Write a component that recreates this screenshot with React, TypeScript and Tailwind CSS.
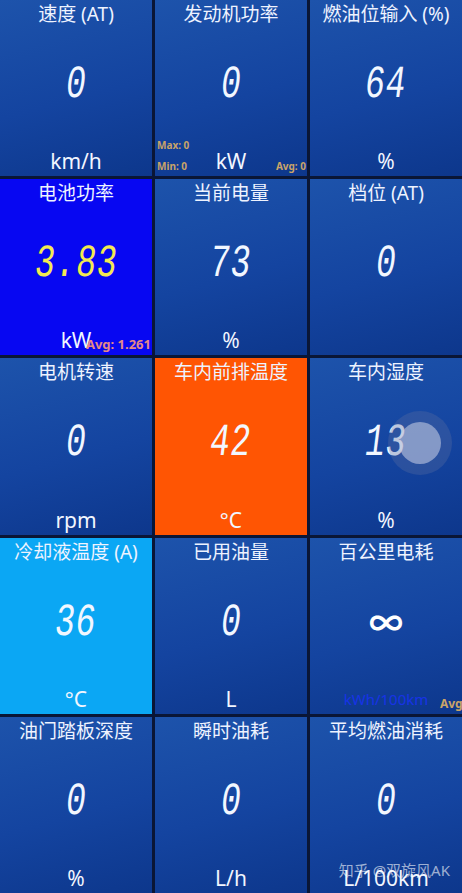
type Tile = {
  title: string
  value: string
  unit: string
  bg?: string
  valueColor?: string
  extra?: React.ReactNode
  unitClass?: string
}

const tiles: Tile[] = [
  { title: '速度 (AT)', value: '0', unit: 'km/h' },
  {
    title: '发动机功率',
    value: '0',
    unit: 'kW',
    extra: (
      <>
        <span className="absolute left-[2px] bottom-[23px] text-[10px] font-bold text-[#c9a468]">Max: 0</span>
        <span className="absolute left-[2px] bottom-[2px] text-[10px] font-bold text-[#c9a468]">Min: 0</span>
        <span className="absolute right-[1px] bottom-[2px] text-[10px] font-bold text-[#c9a468]">Avg: 0</span>
      </>
    ),
  },
  { title: '燃油位输入 (%)', value: '64', unit: '%' },
  {
    title: '电池功率',
    value: '3.83',
    unit: 'kW',
    bg: 'bg-[#0707f2]',
    valueColor: 'text-[#f3ea52]',
    extra: (
      <span className="absolute right-[1px] bottom-[1px] text-[13px] font-bold text-[#e48a86]">Avg: 1.261</span>
    ),
  },
  { title: '当前电量', value: '73', unit: '%' },
  { title: '档位 (AT)', value: '0', unit: '' },
  { title: '电机转速', value: '0', unit: 'rpm' },
  { title: '车内前排温度', value: '42', unit: '°C', bg: 'bg-[#ff5503]' },
  {
    title: '车内湿度',
    value: '13',
    unit: '%',
    extra: (
      <div className="absolute left-[78px] top-[53px] w-[64px] h-[64px] rounded-full bg-[rgba(90,110,160,0.35)] flex items-center justify-center">
        <div className="w-[42px] h-[42px] rounded-full bg-[rgba(205,212,232,0.55)]" />
      </div>
    ),
  },
  { title: '冷却液温度 (A)', value: '36', unit: '°C', bg: 'bg-[#0ba7f4]' },
  { title: '已用油量', value: '0', unit: 'L' },
  {
    title: '百公里电耗',
    value: '∞',
    unit: 'kWh/100km',
    unitClass: 'text-[15px] text-[#1733e6]',
    extra: <span className="absolute right-[-4px] bottom-[1px] text-[12px] font-bold text-[#c9a468]">Avg:</span>,
  },
  { title: '油门踏板深度', value: '0', unit: '%' },
  { title: '瞬时油耗', value: '0', unit: 'L/h' },
  { title: '平均燃油消耗', value: '0', unit: 'L/100km' },
]

function Cell({ t }: { t: Tile }) {
  const bg = t.bg ?? 'bg-[linear-gradient(165deg,#1d53ab_0%,#1444a0_55%,#0d378c_100%)]'
  return (
    <div className={`relative overflow-hidden flex flex-col items-center text-white ${bg}`}>
      <div className="pt-[2px] text-[19px] leading-[24px] text-[#eef3ff]">{t.title}</div>
      <div className="flex-1 flex items-center justify-center pb-[4px]">
        {t.value === '∞' ? (
          <span className="text-[34px] font-bold leading-none text-white">∞</span>
        ) : (
          <span
            className={`inline-block scale-x-[0.72] -skew-x-[10deg] text-[46px] leading-none tracking-[1px] ${
              t.valueColor ?? 'text-[#f2f7ff]'
            } [font-family:'Liberation_Mono',monospace]`}
          >
            {t.value}
          </span>
        )}
      </div>
      <div className={`h-[28px] pb-[2px] leading-[26px] ${t.unitClass ?? 'text-[21px] text-[#f2f6ff]'}`}>{t.unit}</div>
      {t.extra}
    </div>
  )
}

export default function App() {
  return (
    <div className="relative w-[462px] h-[893px] bg-[#0a1636] grid grid-cols-3 grid-rows-5 gap-[3px] [font-family:'Noto_Sans','Noto_Sans_CJK_SC',sans-serif]">
      {tiles.map((t) => (
        <Cell key={t.title} t={t} />
      ))}
      <div className="absolute right-[12px] bottom-[12px] text-[15px] text-white/60 pointer-events-none">
        知乎 @双旋风AK
      </div>
    </div>
  )
}
